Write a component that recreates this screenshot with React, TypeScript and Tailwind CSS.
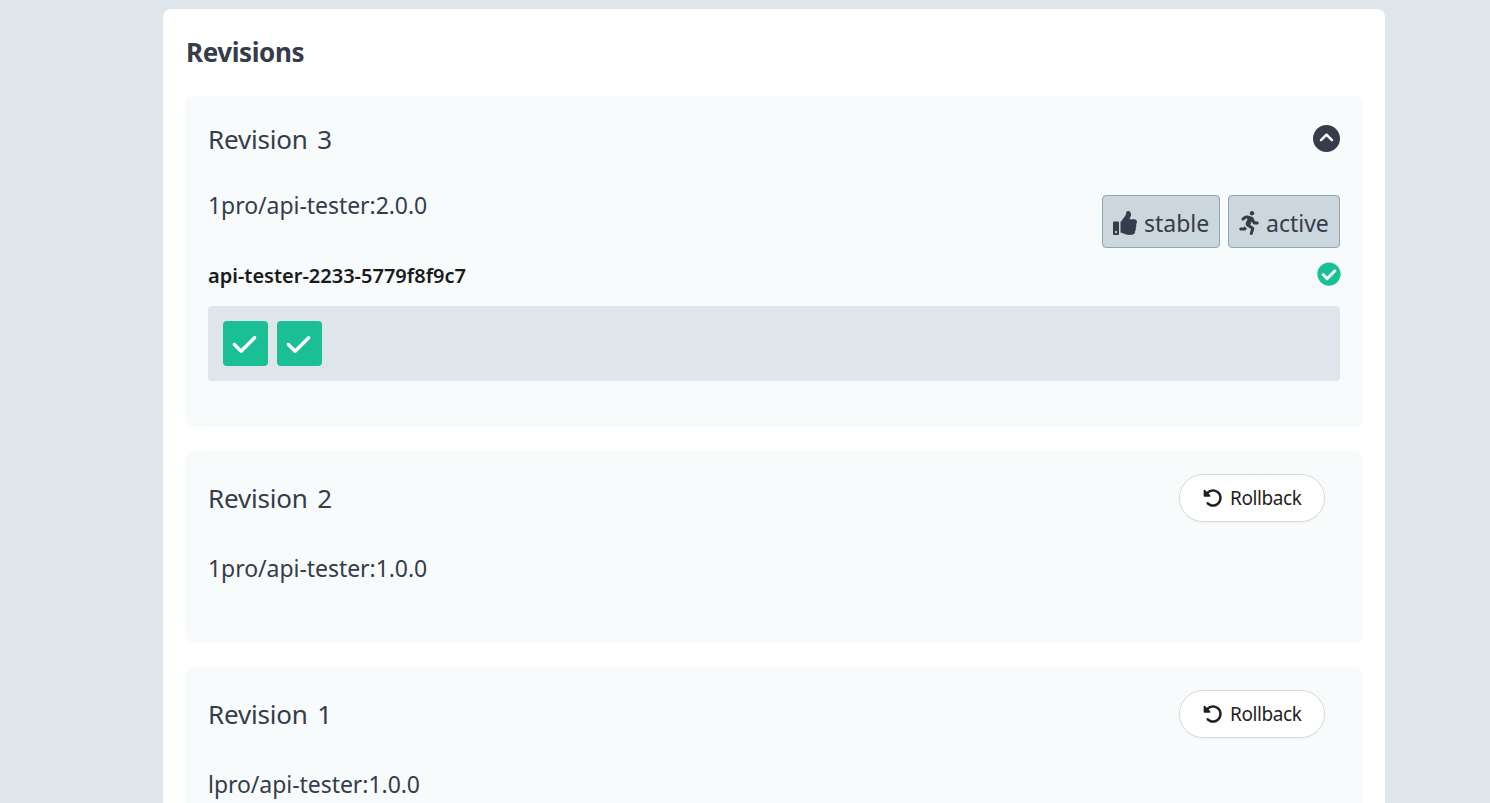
import React from 'react'
import { FaCheckCircle, FaRunning, FaThumbsUp } from 'react-icons/fa'
import { FaCheck, FaCircleChevronUp, FaRotateLeft } from 'react-icons/fa6'

const pods = ['pod-1', 'pod-2']

const oldRevisions = [
  { id: 2, image: '1pro/api-tester:1.0.0' },
  { id: 1, image: 'lpro/api-tester:1.0.0' },
]

const Title = ({ id }: { id: number }) => (
  <h3 className="text-[26px] leading-9 tracking-[-0.2px] [word-spacing:3px]">
    Revision {id}
  </h3>
)

const ImageName = ({ children }: { children: React.ReactNode }) => (
  <p className="text-[23px] leading-8 tracking-[-0.05px]">{children}</p>
)

const Badge = ({
  icon,
  className,
  children,
}: {
  icon: React.ReactNode
  className: string
  children: React.ReactNode
}) => (
  <span
    className={`flex h-[53px] items-center rounded border border-[#90a8b6] bg-[#ccd6dd] pt-[3px] text-[23px] leading-8 ${className}`}
  >
    {icon}
    <span>{children}</span>
  </span>
)

const RollbackButton = () => (
  <button className="mr-[15px] flex h-12 w-[146px] items-center rounded-full border border-[#d9d9d9] bg-white pl-[23px] text-[19px] text-[#1f1f1f] shadow-[0_2px_2px_rgba(0,0,0,0.03)]">
    <FaRotateLeft className="mr-[7px] size-5 shrink-0" />
    <span className="tracking-[-0.4px]">Rollback</span>
  </button>
)

const App = () => {
  return (
    <div className="h-screen overflow-hidden bg-[#dee5eb] pt-[9px] font-['Noto_Sans','Open_Sans',sans-serif] text-[#363c4a]">
      <div className="ml-[163px] w-[1222px] rounded-lg bg-white px-[22px] pb-6 pt-[25px]">
        <h2 className="pl-px text-[26px] font-bold leading-9 tracking-[-0.4px]">
          Revisions
        </h2>

        <div className="mt-[26px] flex flex-col gap-6">
          <section className="h-[331px] rounded-lg bg-[#f7fbfc] px-[23px] pt-[25px]">
            <div className="flex items-center justify-between">
              <Title id={3} />
              <FaCircleChevronUp className="mb-px size-[27px]" />
            </div>
            <div className="mt-8 flex justify-between">
              <ImageName>1pro/api-tester:2.0.0</ImageName>
              <div className="mt-1.5 flex gap-2">
                <Badge
                  className="w-[118px] pl-2.5"
                  icon={<FaThumbsUp className="mr-[7px] size-6" />}
                >
                  stable
                </Badge>
                <Badge
                  className="w-[112px] pl-2"
                  icon={<FaRunning className="mr-[5px] size-6" />}
                >
                  active
                </Badge>
              </div>
            </div>
            <div className="mt-3 flex h-[31px] items-center justify-between">
              <span className="text-[20px] font-semibold text-[#1a1a1a]">
                api-tester-2233-5779f8f9c7
              </span>
              <FaCheckCircle className="-mr-px mb-[3px] size-6 text-[#1abf95]" />
            </div>
            <div className="mt-[15px] flex h-[75px] gap-[9px] rounded bg-[#dee5eb] p-[15px]">
              {pods.map((pod) => (
                <div
                  key={pod}
                  className="flex size-[45px] items-center justify-center rounded bg-[#1abf95] pr-0.5 pt-0.5 text-white"
                >
                  <FaCheck className="size-[27px]" />
                </div>
              ))}
            </div>
          </section>

          {oldRevisions.map(({ id, image }) => (
            <section
              key={id}
              className="h-48 rounded-lg bg-[#f7fbfc] px-[23px] pt-[23px]"
            >
              <div className="flex items-center justify-between">
                <Title id={id} />
                <RollbackButton />
              </div>
              <div className="mt-[30px]">
                <ImageName>{image}</ImageName>
              </div>
            </section>
          ))}
        </div>
      </div>
    </div>
  )
}

export default App
